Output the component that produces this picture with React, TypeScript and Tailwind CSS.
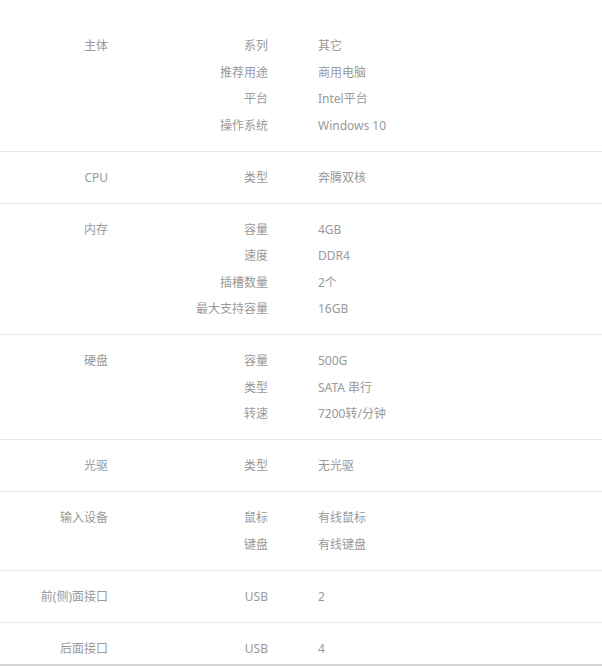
const specs = [
  { title: '主体', items: [['系列', '其它'], ['推荐用途', '商用电脑'], ['平台', 'Intel平台'], ['操作系统', 'Windows 10']] },
  { title: 'CPU', items: [['类型', '奔腾双核']] },
  { title: '内存', items: [['容量', '4GB'], ['速度', 'DDR4'], ['插槽数量', '2个'], ['最大支持容量', '16GB']] },
  { title: '硬盘', items: [['容量', '500G'], ['类型', 'SATA 串行'], ['转速', '7200转/分钟']] },
  { title: '光驱', items: [['类型', '无光驱']] },
  { title: '输入设备', items: [['鼠标', '有线鼠标'], ['键盘', '有线键盘']] },
  { title: '前(侧)面接口', items: [['USB', '2']] },
  { title: '后面接口', items: [['USB', '4']] },
]

export default function App() {
  return (
    <div
      className="w-[602px] h-[666px] overflow-hidden bg-white pt-[20px] text-[12px] text-[#999]"
      style={{ fontFamily: '"Noto Sans", "Noto Sans CJK SC", sans-serif' }}
    >
      <div className="border-b-2 border-[#d4d4d4]">
        {specs.map((group, i) => (
          <div
            key={group.title}
            className={
              i === specs.length - 1
                ? 'flex pt-[13px] pb-[2px]'
                : 'flex pt-[13px] pb-[11.5px] border-b border-[#e8e8e8]'
            }
          >
            <div className="w-[108px] shrink-0 text-right leading-[26.5px]">{group.title}</div>
            <div className="flex flex-col">
              {group.items.map(([k, v]) => (
                <div key={k} className="flex h-[26.5px] items-center">
                  <div className="w-[160px] text-right">{k}</div>
                  <div className="pl-[50px]">{v}</div>
                </div>
              ))}
            </div>
          </div>
        ))}
      </div>
    </div>
  )
}
